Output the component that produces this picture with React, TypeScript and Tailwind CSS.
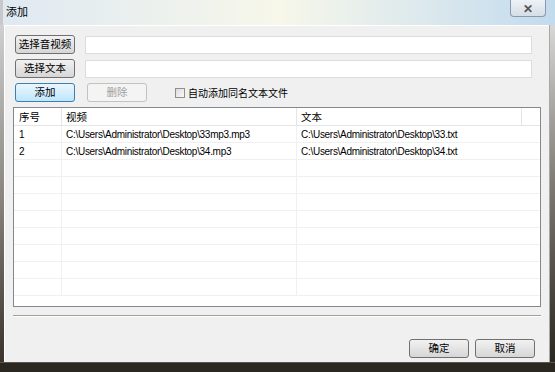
import React from "react"

const font = { fontFamily: '"Noto Sans CJK SC", "Liberation Sans", sans-serif' }

function Btn({ children, w = "w-[60px]", focus = false, disabled = false }: { children: React.ReactNode; w?: string; focus?: boolean; disabled?: boolean }) {
  return (
    <div
      className={`${w} h-[19px] flex items-center justify-center rounded-[3px] border text-[10.5px] leading-none ${
        disabled
          ? "border-[#c2c2c2] bg-[#f4f4f4] text-[#a0a0a0]"
          : focus
          ? "border-[#3c7fb1] bg-gradient-to-b from-[#eaf6fd] to-[#bee6fd] text-black"
          : "border-[#707070] bg-gradient-to-b from-[#f2f2f2] to-[#d6d6d6] text-black"
      }`}
    >
      {children}
    </div>
  )
}

const rows = [
  ["1", "C:\\Users\\Administrator\\Desktop\\33mp3.mp3", "C:\\Users\\Administrator\\Desktop\\33.txt"],
  ["2", "C:\\Users\\Administrator\\Desktop\\34.mp3", "C:\\Users\\Administrator\\Desktop\\34.txt"],
]

export default function App() {
  const empty = Array.from({ length: 8 })
  return (
    <div className="w-[555px] h-[372px] flex flex-col bg-[#2b2721] overflow-hidden" style={font}>
      {/* title bar */}
      <div className="h-[25px] flex items-start justify-between bg-gradient-to-r from-[#dfe9f2] via-[#f7f7ea] to-[#c3dbee] border-l-[3px] border-[#c8c8c8]">
        <div className="pl-[3px] pt-[3px] text-[11px] leading-[16px] text-black">添加</div>
        <div className="mr-[9px] w-[36px] h-[17px] flex items-center justify-center rounded-b-[4px] border border-t-0 border-[#8a9aae] bg-gradient-to-b from-[#eef2f6] to-[#d5dde6] text-[12px] font-bold text-[#555]">
          ✕
        </div>
      </div>

      <div className="flex flex-1">
        <div className="w-[5px] bg-gradient-to-b from-[#d0d0d0] via-[#8b8680] to-[#3a342c]" />
        {/* client */}
        <div className="flex-1 flex flex-col bg-[#f0f0f0] border-t border-l border-[#ffffff] px-[8px] pt-[9px]">
          <div className="flex items-center gap-[10px] pl-[2px]">
            <Btn>选择音视频</Btn>
            <div className="w-[447px] h-[18px] border border-[#dcdcdc] bg-white" />
          </div>
          <div className="flex items-center gap-[10px] pl-[2px] mt-[5px]">
            <Btn>选择文本</Btn>
            <div className="w-[447px] h-[18px] border border-[#dcdcdc] bg-white" />
          </div>
          <div className="flex items-center pl-[2px] mt-[5px]">
            <Btn focus>添加</Btn>
            <div className="ml-[12px]">
              <Btn disabled>删除</Btn>
            </div>
            <div className="ml-[28px] w-[10px] h-[10px] border border-[#8f8f8f] bg-gradient-to-br from-[#dcdcdc] to-[#fafafa]" />
            <div className="ml-[3px] text-[10px] leading-none text-black">自动添加同名文本文件</div>
          </div>

          {/* list */}
          <div className="mt-[5px] w-[528px] h-[200px] border border-[#828790] bg-white overflow-hidden text-[10px] text-black" style={{ fontFamily: '"Liberation Sans", "Noto Sans CJK SC", sans-serif' }}>
            <div className="flex h-[18px] border-b border-[#e5e5e5]">
              <div className="w-[48px] pl-[5px] flex items-center border-r border-[#e5e5e5] text-[10.5px]" style={font}>序号</div>
              <div className="w-[235px] pl-[4px] flex items-center border-r border-[#e5e5e5] text-[10.5px]" style={font}>视频</div>
              <div className="w-[225px] pl-[4px] flex items-center border-r border-[#e5e5e5] text-[10.5px]" style={font}>文本</div>
              <div className="flex-1" />
            </div>
            {rows.map((r) => (
              <div key={r[0]} className="flex h-[17px] border-b border-[#f0f0f0]">
                <div className="w-[48px] pl-[5px] flex items-center border-r border-[#f0f0f0]">{r[0]}</div>
                <div className="w-[235px] pl-[4px] flex items-center border-r border-[#f0f0f0] tracking-[-0.3px]">{r[1]}</div>
                <div className="w-[225px] pl-[4px] flex items-center tracking-[-0.3px]">{r[2]}</div>
              </div>
            ))}
            {empty.map((_, i) => (
              <div key={i} className="flex h-[17px] border-b border-[#f0f0f0]">
                <div className="w-[48px] border-r border-[#f0f0f0]" />
                <div className="w-[235px] border-r border-[#f0f0f0]" />
              </div>
            ))}
          </div>

          <div className="mt-[8px] w-[528px] h-[2px] border-t border-[#a0a0a0] border-b border-b-white" />

          <div className="flex justify-end gap-[6px] mt-[22px] pr-[6px]">
            <Btn>确定</Btn>
            <Btn>取消</Btn>
          </div>
        </div>
        <div className="w-[7px] bg-gradient-to-b from-[#d8d8d8] via-[#7a756e] to-[#2b2721] border-l border-[#a8a8a8]" />
      </div>
      <div className="h-[10px] bg-[#2b2721] border-t border-[#5a554e]" />
    </div>
  )
}
